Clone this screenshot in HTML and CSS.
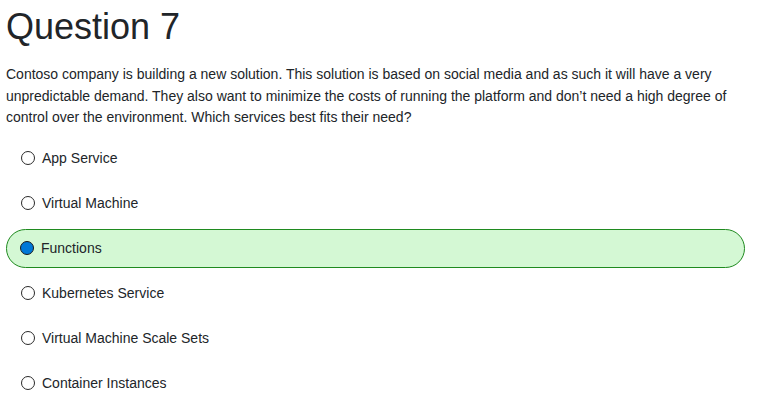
FILE: index.html
```html
<!DOCTYPE html>
<html lang="en">
<head>
<meta charset="utf-8">
<title>Question 7</title>
<link rel="stylesheet" href="styles.css">
</head>
<body>
<main class="quiz">
  <h1 class="title">Question 7</h1>
  <p class="prompt">Contoso company is building a new solution. This solution is based on social media and as such it will have a very unpredictable demand. They also want to minimize the costs of running the platform and don’t need a high degree of control over the environment. Which services best fits their need?</p>
  <ul class="options">
    <li class="option"><span class="radio"></span><span class="label">App Service</span></li>
    <li class="option"><span class="radio"></span><span class="label">Virtual Machine</span></li>
    <li class="option selected"><span class="radio checked"></span><span class="label">Functions</span></li>
    <li class="option"><span class="radio"></span><span class="label">Kubernetes Service</span></li>
    <li class="option"><span class="radio"></span><span class="label">Virtual Machine Scale Sets</span></li>
    <li class="option"><span class="radio"></span><span class="label">Container Instances</span></li>
  </ul>
</main>
</body>
</html>
```
FILE: styles.css
```css
html, body {
  margin: 0;
  padding: 0;
  background: #ffffff;
}
body {
  font-family: "Liberation Sans", Arial, sans-serif;
  color: #212529;
}
.quiz {
  padding: 5px 34px 0 6px;
}
.title {
  margin: 0;
  font-size: 36px;
  font-weight: 400;
  line-height: 43px;
}
.prompt {
  margin: 16px 0 0 0;
  font-size: 14px;
  line-height: 21.5px;
}
.options {
  list-style: none;
  margin: 10px 0 0 0;
  padding: 0;
  display: flex;
  flex-direction: column;
  gap: 6px;
}
.option {
  display: flex;
  align-items: center;
  gap: 7px;
  height: 39px;
  box-sizing: border-box;
  padding-left: 14px;
  border: 1px solid transparent;
  border-radius: 20px;
  font-size: 14px;
}
.option.selected {
  background: #d4f8d4;
  border-color: #1f8a1f;
  padding-left: 13px;
}
.radio {
  width: 14px;
  height: 14px;
  box-sizing: border-box;
  border: 1.5px solid #2a2a2a;
  border-radius: 50%;
  background: #ffffff;
  flex: none;
}
.radio.checked {
  background: #0078d7;
  border-color: #1a1a1a;
}
.label {
  line-height: 16px;
}
```
